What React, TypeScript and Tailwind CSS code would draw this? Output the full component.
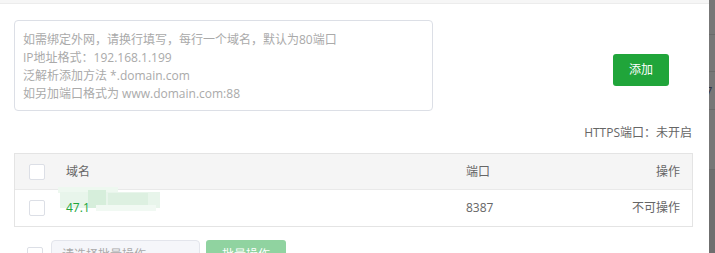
import React from 'react';

const HINTS = [
  '如需绑定外网，请换行填写，每行一个域名，默认为80端口',
  'IP地址格式：192.168.1.199',
  '泛解析添加方法 *.domain.com',
  '如另加端口格式为 www.domain.com:88',
];

function Check() {
  return <span className="block h-4 w-4 shrink-0 rounded-[2px] border border-[#dcdfe6] bg-white" />;
}

export default function App() {
  return (
    <div
      className="flex h-[253px] w-[715px] overflow-hidden bg-white text-[12px] text-[#666]"
      style={{ fontFamily: '"Open Sans", "Noto Sans CJK SC", sans-serif' }}
    >
      <div className="flex w-[709px] flex-col">
        <div className="h-[4px] shrink-0 border-b border-[#ececec] bg-[#f6f6f6]" />

        <div className="flex items-start">
          <div className="ml-[14px] mt-[16px] h-[91px] w-[419px] rounded-[4px] border border-[#dcdfe6] px-[8px] pt-[10px] leading-[18px] text-[#aaa]">
            {HINTS.map((line) => (
              <div key={line}>{line}</div>
            ))}
          </div>
          <button className="ml-[180px] mt-[50px] h-[32px] w-[56px] rounded-[3px] bg-[#20a53a] text-[12px] text-white">
            添加
          </button>
        </div>

        <div className="mt-[15px] pr-[17px] text-right leading-[14px] text-[#666]">HTTPS端口：未开启</div>

        <div className="ml-[14px] mt-[13px] w-[679px] border border-[#e4e4e4]">
          <div className="flex h-[36px] items-center border-b border-[#e9e9e9] bg-[#f5f5f5] pl-[14px] pr-[12px]">
            <Check />
            <span className="ml-[21px] w-[400px]">域名</span>
            <span className="w-[110px]">端口</span>
            <span className="flex-1 text-right">操作</span>
          </div>
          <div className="flex h-[36px] items-center pl-[14px] pr-[12px]">
            <Check />
            <span className="relative ml-[21px] w-[400px]">
              <span className="absolute left-[-8px] top-[-12px] h-[6px] w-[60px] bg-[#eef8f0]" />
              <span className="absolute left-[-6px] top-[-7px] h-[16px] w-[100px] bg-[#e8f5eb]" />
              <span className="absolute left-[22px] top-[-9px] h-[18px] w-[18px] bg-[#d6eedb]" />
              <span className="absolute left-[42px] top-[-6px] h-[16px] w-[40px] bg-[#ddf0e1]" />
              <span className="absolute left-[30px] top-[6px] h-[6px] w-[60px] bg-[#f1f9f3]" />
              <span className="relative text-[#20a53a]">47.1</span>
            </span>
            <span className="w-[110px]">8387</span>
            <span className="flex-1 text-right">不可操作</span>
          </div>
        </div>

        <div className="mt-[13px] flex items-start pl-[27px]">
          <span className="mt-[7px]">
            <Check />
          </span>
          <div className="ml-[8px] flex h-[30px] w-[149px] items-center rounded-[4px] border border-[#e3e5ec] bg-[#f5f6fa] pl-[10px] text-[#aaa]">
            请选择批量操作
          </div>
          <button className="ml-[6px] h-[30px] w-[80px] rounded-[3px] bg-[#90d3a0] text-[12px] text-white">
            批量操作
          </button>
        </div>
      </div>

      <div className="flex w-[6px] flex-col bg-[#777]">
        <div className="h-[35px] border-b border-[#6a6a6a]" />
        <div className="h-[37px] border-b border-[#6a6a6a]" />
        <div className="relative h-[38px] overflow-hidden border-b border-[#6a6a6a]">
          <span className="absolute left-[-4px] top-[10px] text-[13px] text-[#334]">7</span>
        </div>
        <div className="h-[60px] border-b border-[#6a6a6a]" />
        <div className="flex-1 bg-[#6f6f6f]" />
      </div>
    </div>
  );
}
